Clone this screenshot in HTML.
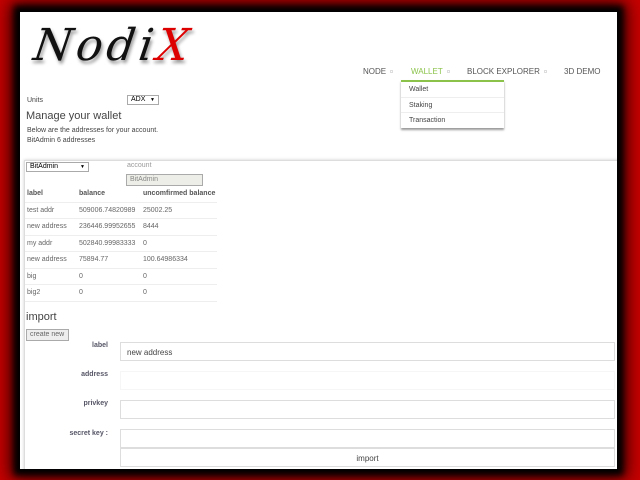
<!DOCTYPE html>
<html><head><style>
*{box-sizing:border-box;margin:0;padding:0}
body{width:640px;height:480px;overflow:hidden;background:#c80000;font-family:"Liberation Sans",sans-serif;position:relative}
.panel{position:absolute;left:20px;top:12px;width:597px;height:457px;background:#fff;box-shadow:0 0 6px 6px #000,0 0 16px 10px #300;overflow:hidden}
.logo{position:absolute;left:14px;top:8px;font-family:"DejaVu Serif",serif;font-style:italic;font-size:44px;font-weight:normal;color:#111;letter-spacing:4px;text-shadow:2px 3px 3px #999;transform:skewX(-8deg)}
.logo span{color:#d00}
.nav{position:absolute;top:55px;font-size:8px;color:#555}
.nav div{position:absolute;white-space:nowrap}
.sq{display:inline-block;width:3px;height:3px;border:1px solid #ddd;margin-left:4px;vertical-align:middle}
.dd{position:absolute;left:381px;top:68px;width:103px;height:48px;background:#fff;border-top:2px solid #8bc34a;box-shadow:0 2px 2px #999;font-size:7px;color:#444}
.dd div{height:15.5px;line-height:15px;padding-left:8px;border-bottom:1px solid #eee}
.sm{font-size:7px;color:#444;position:absolute;white-space:nowrap}
.sel{position:absolute;border:1px solid #aaa;font-size:7px;background:#fff;padding:0 3px;height:10px;line-height:8px;white-space:nowrap}
.box{position:absolute;left:4px;top:148px;width:600px;height:320px;border:1px solid #ddd;box-shadow:0 0 3px #ccc}
table{position:absolute;left:5px;top:174px;border-collapse:collapse;font-family:"Liberation Sans",sans-serif;font-size:7px;color:#666;white-space:nowrap}
td{height:16.5px;border-bottom:1px solid #eee;padding-left:2px}
th{text-align:left;font-weight:bold;color:#555;height:16px;padding-left:2px;border-bottom:1px solid #eee}
.lbl{position:absolute;font-size:7px;color:#556;font-weight:bold;text-align:right;width:70px;left:18px;white-space:nowrap}
.inp{position:absolute;left:100px;width:495px;height:19px;border:1px solid #ddd;font-size:8px;color:#444;padding:5px 6px}
</style></head><body>
<div class="panel">
<div class="logo">Nodi<span>X</span></div>
<div class="nav"><div style="left:343px">NODE<span class="sq"></span></div><div style="left:391px;color:#8bc34a">WALLET<span class="sq"></span></div><div style="left:447px">BLOCK EXPLORER<span class="sq"></span></div><div style="left:544px">3D DEMO</div></div>
<div class="dd"><div>Wallet</div><div>Staking</div><div style="border:none">Transaction</div></div>
<div class="sm" style="left:7px;top:85px">Units</div>
<div class="sel" style="left:107px;top:83px;width:32px">ADX <span style="float:right;font-size:5px">▼</span></div>
<div style="position:absolute;left:6px;top:98px;font-size:11px;color:#444">Manage your wallet</div>
<div class="sm" style="left:7px;top:115px">Below are the addresses for your account.</div>
<div class="sm" style="left:7px;top:125px">BitAdmin 6 addresses</div>
<div class="box"></div>
<div class="sel" style="left:6px;top:150px;width:63px">BitAdmin <span style="float:right;font-size:5px">▼</span></div>
<div class="sm" style="left:107px;top:150px;color:#999">account</div>
<div class="sel" style="left:106px;top:162px;width:77px;height:12px;background:#eeeee8;color:#888;line-height:10px">BitAdmin</div>
<table>
<tr><th style="width:52px">label</th><th style="width:64px">balance</th><th style="width:76px">uncomfirmed balance</th></tr>
<tr><td>test addr</td><td>509006.74820989</td><td>25002.25</td></tr>
<tr><td>new address</td><td>236446.99952655</td><td>8444</td></tr>
<tr><td>my addr</td><td>502840.99983333</td><td>0</td></tr>
<tr><td>new address</td><td>75894.77</td><td>100.64986334</td></tr>
<tr><td>big</td><td>0</td><td>0</td></tr>
<tr><td>big2</td><td>0</td><td>0</td></tr>
</table>
<div style="position:absolute;left:6px;top:299px;font-size:11px;color:#444">import</div>
<div class="sel" style="left:6px;top:317px;width:43px;height:12px;background:#eee;color:#666;line-height:10px">create new</div>
<div class="lbl" style="top:330px">label</div>
<div class="inp" style="top:330px">new address</div>
<div class="lbl" style="top:359px">address</div>
<div class="inp" style="top:359px;border-color:#f6f6f6"></div>
<div class="lbl" style="top:388px">privkey</div>
<div class="inp" style="top:388px"></div>
<div class="lbl" style="top:418px">secret key :</div>
<div class="inp" style="top:417px"></div>
<div class="inp" style="top:436px;text-align:center">import</div>
</div>
</body></html>
